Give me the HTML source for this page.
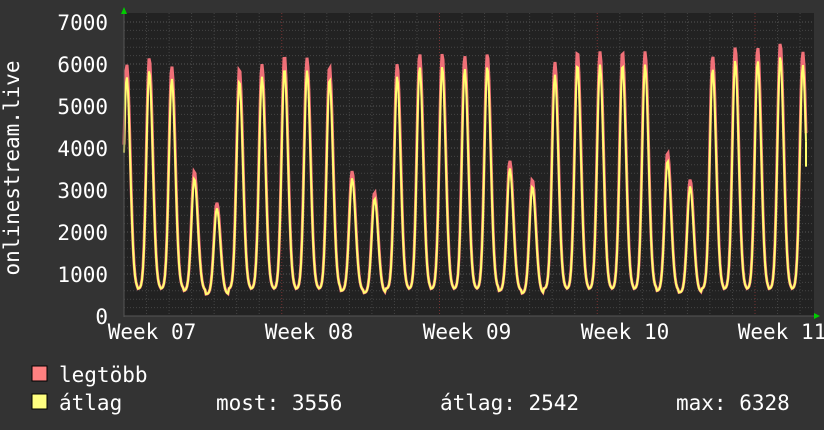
<!DOCTYPE html>
<html><head><meta charset="utf-8"><style>
html,body{margin:0;padding:0;background:#333;width:824px;height:430px;overflow:hidden}
svg{display:block}
text{font-family:"DejaVu Sans Mono","Liberation Mono",monospace;fill:#fff;font-size:21px}
</style></head><body>
<svg id="s" width="824" height="430" xmlns="http://www.w3.org/2000/svg">
<rect x="0" y="0" width="824" height="430" fill="#333"/>
<rect x="124" y="13" width="690" height="303" fill="#222"/>
<g id="grid"></g>
<g id="data"></g>
<line x1="124" y1="316" x2="816" y2="316" stroke="#555" stroke-width="1"/>
<line x1="124" y1="12" x2="124" y2="317" stroke="#555" stroke-width="1"/>
<polygon points="121,14 127,14 124,7" fill="#0c0"/>
<polygon points="814,313 814,319 820,316" fill="#0c0"/>
<g text-anchor="end">
<text x="108" y="30">7000</text><text x="108" y="72">6000</text><text x="108" y="114">5000</text>
<text x="108" y="156">4000</text><text x="108" y="198">3000</text><text x="108" y="240">2000</text>
<text x="108" y="282">1000</text><text x="108" y="324">0</text>
</g>
<g text-anchor="middle">
<text x="152" y="339">Week 07</text><text x="309" y="339">Week 08</text><text x="467" y="339">Week 09</text>
<text x="625" y="339">Week 10</text><text x="782" y="339">Week 11</text>
</g>
<text transform="translate(19,168) rotate(-90)" text-anchor="middle">onlinestream.live</text>
<rect x="32" y="366" width="15" height="15" fill="#ff8080" stroke="#000" stroke-width="1"/>
<rect x="32" y="394" width="15" height="15" fill="#ffff80" stroke="#000" stroke-width="1"/>
<text x="59" y="382">legtöbb</text>
<text x="59" y="410">átlag</text>
<text x="216" y="410">most: 3556</text>
<text x="440" y="410">átlag: 2542</text>
<text x="676" y="410">max: 6328</text>
</svg>
<script>
var NS="http://www.w3.org/2000/svg";
function el(p,t,a){var e=document.createElementNS(NS,t);for(var k in a)e.setAttribute(k,a[k]);p.appendChild(e);return e;}
var g=document.getElementById('grid');
for(var v=200;v<=7000;v+=200){var y=316-v*0.042;el(g,'line',{x1:124,x2:814,y1:y,y2:y,stroke:(v%1000==0)?'#555':'#444','stroke-dasharray':'1,2','stroke-width':1});}
var day=157.75/7;
for(var i=1;i<31;i++){var x=124+i*day;el(g,'line',{x1:x,x2:x,y1:13,y2:316,stroke:(i%7==0)?'#733':'#444','stroke-dasharray':'1,2'});}
var peaks=[6000,6150,5950,3450,2700,5900,6000,6200,6150,5950,3450,2950,6000,6250,6250,6200,6250,3700,3250,6050,6300,6300,6300,6300,3900,3250,6200,6400,6400,6500,6300];
var mins=[650,650,650,600,520,650,650,650,650,650,600,550,650,650,650,650,650,600,540,650,650,650,650,650,600,560,650,650,650,650,650];
function val(x,scale){var t=(x-124)/day;
 var cd=Math.round(t-0.12);var i=Math.max(0,Math.min(30,cd));var dist=t-0.12-cd;
 var p=peaks[i]*scale, m=mins[i];
 var w=dist<0?0.18:0.22;var f=Math.exp(-Math.pow(dist/w,2));
 return m+(p-m)*f;}
var dpts=[],apts=[];
for(var x=124;x<=806;x+=1){dpts.push(x+','+(316-val(x,1)*0.042).toFixed(1));apts.push(x+','+(316-val(x,0.95)*0.042).toFixed(1));}
var d=document.getElementById('data');
el(d,'polyline',{points:dpts.join(' '),fill:'none',stroke:'#f07078','stroke-width':3});
el(d,'polyline',{points:apts.join(' '),fill:'none',stroke:'#ffff70','stroke-width':2});
el(d,'line',{x1:806,y1:316-val(806,0.95)*0.042,x2:806,y2:316-3556*0.042,stroke:'#ffff70','stroke-width':2});
</script>
</body></html>
